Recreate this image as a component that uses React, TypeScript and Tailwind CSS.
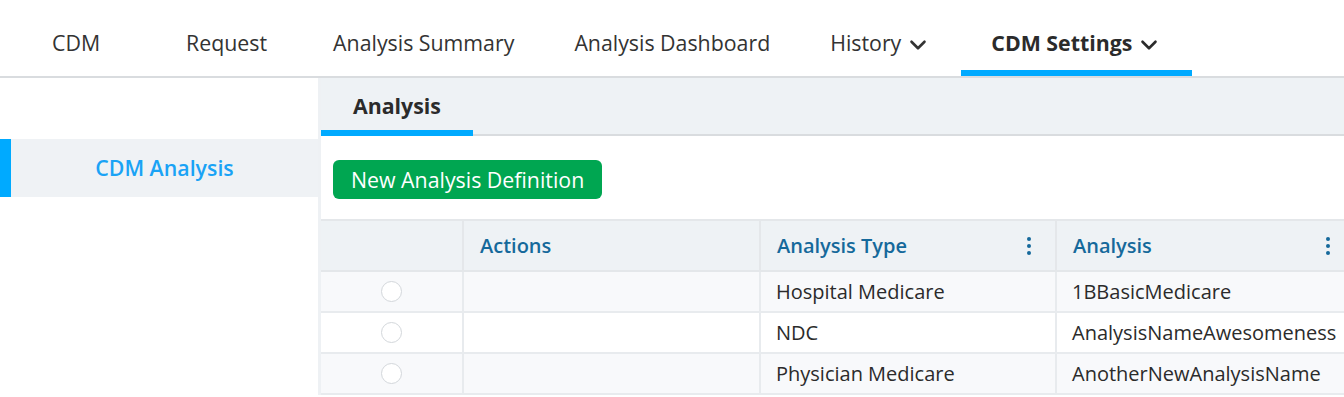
import React from 'react';
import { ChevronDown } from 'lucide-react';

interface Row {
  type: string;
  name: string;
}

const rows: Row[] = [
  { type: 'Hospital Medicare', name: '1BBasicMedicare' },
  { type: 'NDC', name: 'AnalysisNameAwesomeness' },
  { type: 'Physician Medicare', name: 'AnotherNewAnalysisName' }
];

const navItems = [
  { label: 'CDM', cls: 'ml-[22px]' },
  { label: 'Request', cls: 'ml-[26px]' },
  { label: 'Analysis Summary', cls: 'ml-[6px]' },
  { label: 'Analysis Dashboard', cls: '' },
  { label: 'History', cls: '', menu: true },
  { label: 'CDM Settings', cls: '', menu: true, active: true }
];

const Dots = () => (
  <div className="flex flex-col items-center gap-[3px]">
    <span className="w-[4px] h-[4px] rounded-full bg-[#15699b]" />
    <span className="w-[4px] h-[4px] rounded-full bg-[#15699b]" />
    <span className="w-[4px] h-[4px] rounded-full bg-[#15699b]" />
  </div>
);

const App = () => {
  return (
    <div
      className="w-[1344px] h-[397px] overflow-hidden bg-white text-[#333333]"
      style={{ fontFamily: '"Open Sans", "Noto Sans", sans-serif' }}
    >
      {/* Top navigation */}
      <div className="flex items-stretch h-[78px] border-b-2 border-[#d9dcdf]">
        {navItems.map((item) => (
          <div
            key={item.label}
            className={`relative flex items-center px-[30px] pt-[10px] text-[21.33px] ${item.cls} ${
              item.active ? 'font-bold text-[#2b2b2b]' : 'text-[#333333]'
            }`}
          >
            <span>{item.label}</span>
            {item.menu && (
              <ChevronDown className="ml-[4px] mt-[3px]" size={26} strokeWidth={2.4} />
            )}
            {item.active && (
              <span className="absolute left-0 right-0 bottom-0 h-[6px] bg-[#00aaff]" />
            )}
          </div>
        ))}
      </div>

      <div className="flex">
        {/* Sidebar */}
        <div className="w-[318px] shrink-0 pt-[61px]">
          <div className="flex h-[58px] bg-[#eff2f5]">
            <div className="w-[11px] bg-[#00aaff]" />
            <div className="flex-1 flex items-center justify-center text-[21.33px] font-semibold text-[#1aa3f5]">
              CDM Analysis
            </div>
          </div>
        </div>

        {/* Main content */}
        <div className="flex-1 min-w-0 border-l-[3px] border-[#eef1f4]">
          <div className="flex h-[58px] bg-[#eef2f5] border-b-2 border-[#d9dcdf]">
            <div className="relative flex items-center px-[32px] text-[21.33px] font-bold text-[#2b2b2b]">
              Analysis
              <span className="absolute left-0 right-0 bottom-[-2px] h-[6px] bg-[#00aaff]" />
            </div>
          </div>

          <div className="pt-[24px]">
            <button className="ml-[12px] h-[39px] px-[18px] rounded-[6px] bg-[#00a651] text-white text-[21.33px] leading-none">
              New Analysis Definition
            </button>
          </div>

          <div className="mt-[20px] border-t-2 border-[#e4e7ea]">
            <div className="flex h-[51px] bg-[#eef2f5] border-b-2 border-[#e4e7ea] text-[20px] font-semibold text-[#15699b]">
              <div className="w-[143px] shrink-0 border-r-2 border-[#e4e7ea]" />
              <div className="w-[297px] shrink-0 flex items-center px-[16px] border-r-2 border-[#e4e7ea]">
                Actions
              </div>
              <div className="w-[296px] shrink-0 flex items-center justify-between pl-[16px] pr-[24px] border-r-2 border-[#e4e7ea]">
                Analysis Type
                <Dots />
              </div>
              <div className="w-[287px] shrink-0 flex items-center justify-between pl-[16px] pr-[14px]">
                Analysis
                <Dots />
              </div>
            </div>

            {rows.map((row, index) => (
              <div
                key={row.name}
                className={`flex h-[41px] border-b-2 border-[#e8ebee] text-[20px] text-[#2b2b2b] ${
                  index % 2 === 0 ? 'bg-[#f8f9fb]' : 'bg-white'
                }`}
              >
                <div className="w-[143px] shrink-0 flex items-center justify-center border-r-2 border-[#e8ebee]">
                  <span className="w-[21px] h-[21px] rounded-full border-[1.5px] border-[#d3d7db] bg-white" />
                </div>
                <div className="w-[297px] shrink-0 border-r-2 border-[#e8ebee]" />
                <div className="w-[296px] shrink-0 flex items-center px-[15px] border-r-2 border-[#e8ebee]">
                  {row.type}
                </div>
                <div className="w-[287px] shrink-0 flex items-center px-[15px] whitespace-nowrap">
                  {row.name}
                </div>
              </div>
            ))}
          </div>
        </div>
      </div>
    </div>
  );
};

export default App;
